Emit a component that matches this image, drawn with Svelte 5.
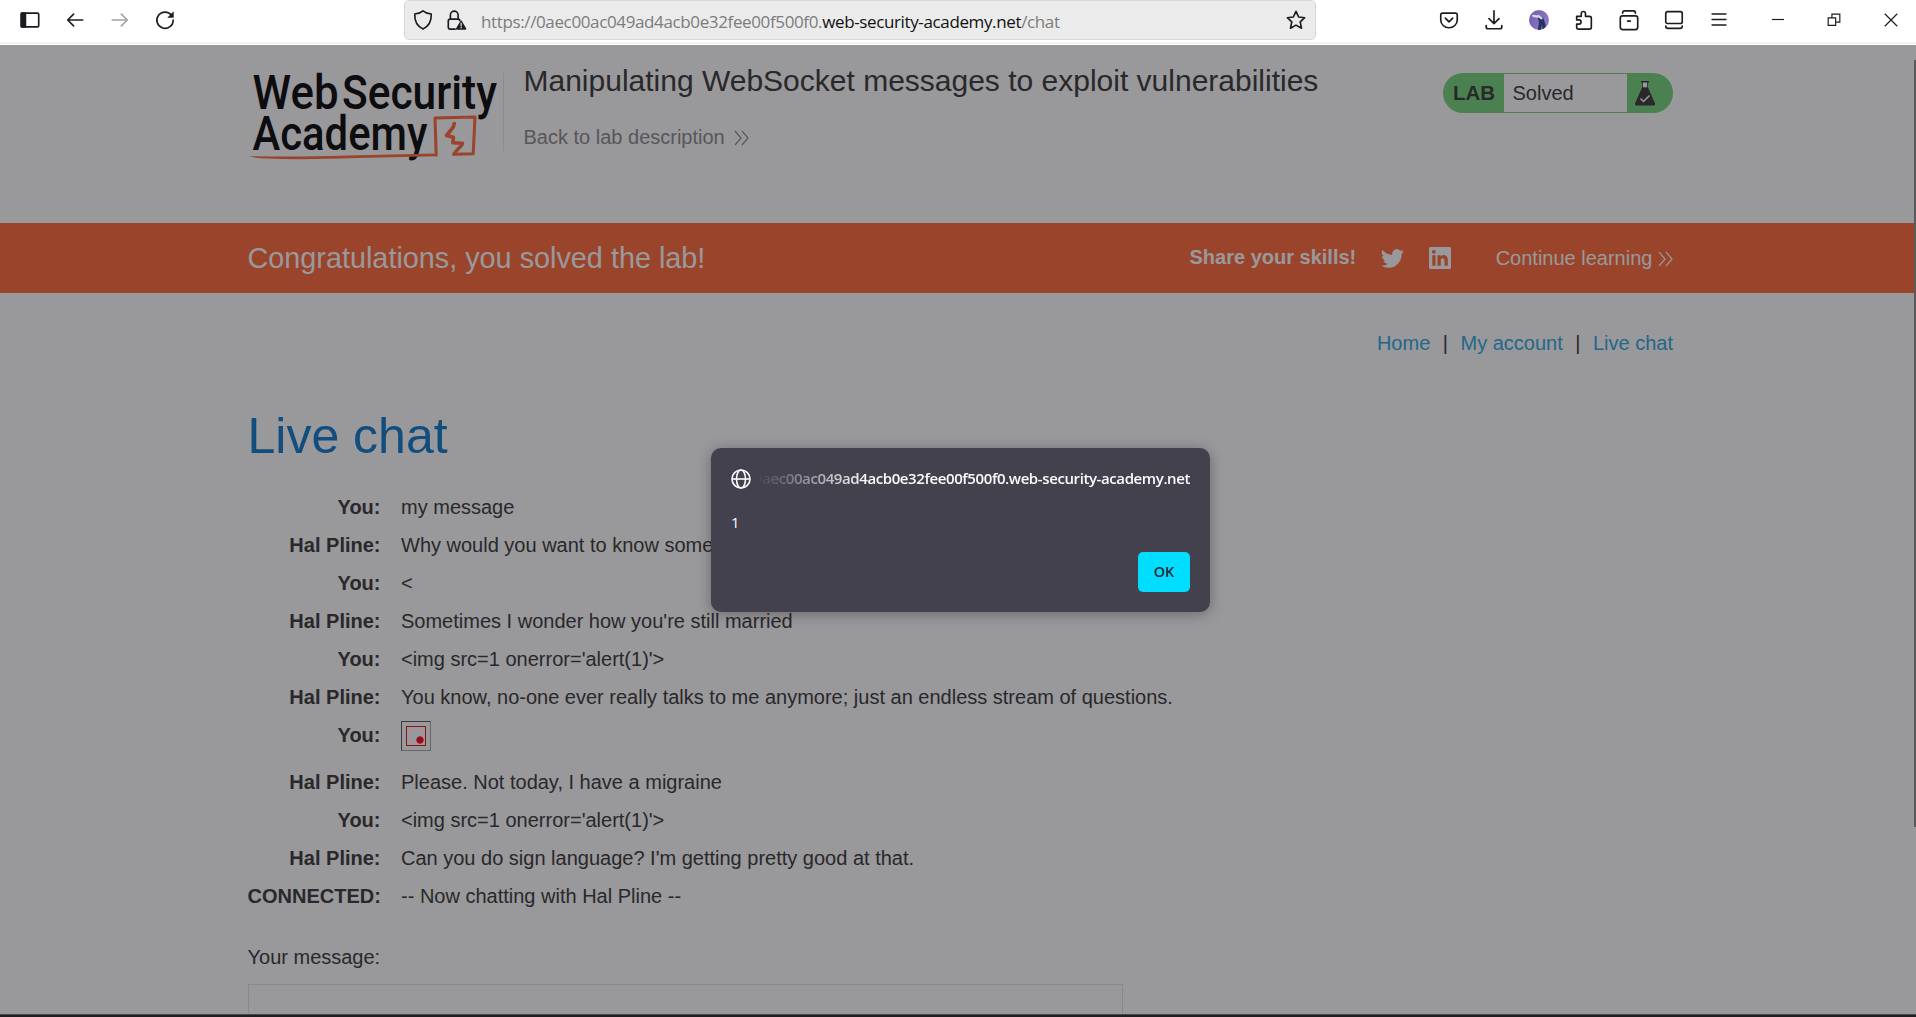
<script>
  const chat = [
    { who: 'You:', text: 'my message' },
    { who: 'Hal Pline:', text: 'Why would you want to know something like that?' },
    { who: 'You:', text: '<' },
    { who: 'Hal Pline:', text: "Sometimes I wonder how you're still married" },
    { who: 'You:', text: "<img src=1 onerror='alert(1)'>" },
    { who: 'Hal Pline:', text: 'You know, no-one ever really talks to me anymore; just an endless stream of questions.' },
    { who: 'You:', broken: true },
    { who: 'Hal Pline:', text: 'Please. Not today, I have a migraine' },
    { who: 'You:', text: "<img src=1 onerror='alert(1)'>" },
    { who: 'Hal Pline:', text: "Can you do sign language? I'm getting pretty good at that." },
    { who: 'CONNECTED:', text: '-- Now chatting with Hal Pline --' }
  ];
</script>

<div class="window">
  <header class="toolbar">
    <div class="tools">
      <button aria-label="Sidebar"><svg viewBox="0 0 24 24"><rect x="2.500" y="4.500" width="19" height="15" rx="1.6" /><path class="solid" d="M2.500 4.500h4.500v15H2.500z" /></svg></button>
      <button aria-label="Back"><svg viewBox="0 0 24 24"><path d="M20.500 12H4M10.500 5.500L4 12l6.500 6.500" /></svg></button>
      <button class="off" aria-label="Forward"><svg viewBox="0 0 24 24"><path d="M3.500 12H20M13.500 5.500L20 12l-6.500 6.500" /></svg></button>
      <button aria-label="Reload"><svg viewBox="0 0 24 24"><path d="M19.200 7A8.900 8.900 0 1 0 20.900 12" /><path class="solid" stroke="none" d="M21.500 2.500v7h-7z" /></svg></button>
    </div>
    <div class="address">
      <svg viewBox="0 0 24 24"><path d="M12 2c2.500 2.200 5.200 3.200 9 3.400.3 7.300-2.600 13.300-9 16.400C5.600 18.700 2.700 12.700 3 5.400c3.800-.2 6.500-1.200 9-3.400z" /></svg>
      <svg class="lock" viewBox="0 0 24 24"><path d="M10 22H4.500Q2.500 22 2.500 20v-7q0-2 2-2h8.500q2 0 2 1.500M4.800 11V6.500a4 4 0 0 1 8.400 0V11" /><path class="solid" d="M16.500 13.500l4.800 8.200h-9.600z" /><path class="mark" d="M16.500 15.500v3M16.500 20v.5" /></svg>
      <span class="url">https://0aec00ac049ad4acb0e32fee00f500f0.<b>web-security-academy.net</b>/chat</span>
      <svg class="star" viewBox="0 0 24 24"><path d="M12 2.500l2.900 6.200 6.600.8-4.900 4.600 1.400 6.900-6-3.400-6 3.400 1.400-6.900-4.900-4.600 6.600-.8z" /></svg>
    </div>
    <div class="tools right">
      <button aria-label="Pocket"><svg viewBox="0 0 24 24"><path d="M5 4.500h14q2 0 2 2v5.500a9 8.500 0 0 1-18 0V6.500q0-2 2-2zM8 10l4 4 4-4" /></svg></button>
      <button aria-label="Downloads"><svg viewBox="0 0 24 24"><path d="M12 2v14M6.500 10.500L12 16l5.500-5.500M3.500 18v1.500q0 2 2 2h13q2 0 2-2V18" /></svg></button>
      <button aria-label="Profile"><span class="avatar"><svg viewBox="0 0 24 24"><path class="body" d="M10 7l7 2 3 9-1 6h-2.500l-1-7-1 7h-4l1.500-9z" /><path class="arm" d="M5 7l5 1M11 7l4 3" /></svg></span></button>
      <button aria-label="Extensions"><svg viewBox="0 0 24 24"><path d="M4 8h5V5a2.300 2.300 0 0 1 4.600 0v3H18q2 0 2 2v10q0 2-2 2H6q-2 0-2-2v-3.500h2.500a2.300 2.300 0 0 0 0-4.600H4z" /></svg></button>
      <button aria-label="Archive"><svg viewBox="0 0 24 24"><rect x="2.500" y="7.500" width="19" height="15" rx="2.500" /><path d="M5 4.500q0-2.500 2-2.500h10q2 0 2 2.500M10.500 13.200h3" /></svg></button>
      <button aria-label="Panel"><svg viewBox="0 0 24 24"><rect x="3" y="2.800" width="18" height="13" rx="2" /><path d="M3 18.500q0 2.700 2.500 2.700h13q2.500 0 2.500-2.700" /></svg></button>
      <button aria-label="Menu"><svg viewBox="0 0 24 24"><path d="M4.500 5.500h15M4.500 11.500h15M4.500 17.500h15" /></svg></button>
    </div>
    <div class="controls">
      <button aria-label="Minimize"><svg viewBox="0 0 24 24"><path d="M4.800 11.400h14.400" /></svg></button>
      <button aria-label="Restore"><svg viewBox="0 0 24 24"><path d="M5 9.500h9v9H5zM9.500 9V5h9.500v9.500H14.500" /></svg></button>
      <button aria-label="Close"><svg viewBox="0 0 24 24"><path d="M4.500 4.500l15 15M19.500 4.500l-15 15" /></svg></button>
    </div>
  </header>

  <main class="page">
    <section class="lab-header wrap">
      <svg class="logo" viewBox="0 0 255 100">
        <g class="wordmark">
          <text x="4.500" y="44" textLength="86" lengthAdjust="spacingAndGlyphs">Web</text>
          <text x="94" y="44" textLength="155" lengthAdjust="spacingAndGlyphs">Security</text>
          <text x="4.500" y="84.500" textLength="175" lengthAdjust="spacingAndGlyphs">Academy</text>
        </g>
        <path class="line" d="M1.500 91.200C35 92 70 91.500 100 90.600L188 88.600V91.200L110 93Q50 95 20 93.500Q8 93.500 1.500 91.200z" />
        <path class="ribbon" d="M188.200 90.200L187 53l40-1-1.800 36.800-19.200.4" />
        <path class="ribbon bolt" d="M206.300 58.500Q206 62 203 65L198.500 70.500 205.500 72.200 204.800 77.800 214.500 78.300Q213.500 81 210 84L206 89" />
      </svg>
      <div class="heading">
        <h2>Manipulating WebSocket messages to exploit vulnerabilities</h2>
        <a class="back" href="#lab">Back to lab description <svg viewBox="0 0 15 16"><path d="M1 1l6 7-6 7M8 1l6 7-6 7" /></svg></a>
      </div>
      <div class="status">
        <strong>LAB</strong><span>Solved</span>
        <svg viewBox="0 0 20 25"><path class="neck" d="M7.500 1v6h5V1" /><path d="M6 0h8v1.500H6z" /><path d="M7 6.500h6l7 16q.4 2-1.500 2H1.500q-1.900 0-1.500-2z" /><path class="tick" d="M5.500 17.500l3 3 6-6" /></svg>
      </div>
    </section>

    <section class="banner">
      <div class="wrap">
        <h3>Congratulations, you solved the lab!</h3>
        <strong>Share your skills!</strong>
        <svg class="bird" viewBox="0 0 24 24"><path d="M23.950 4.570a10 10 0 0 1-2.820.77 4.960 4.960 0 0 0 2.160-2.720c-.95.550-2 .950-3.130 1.180a4.920 4.920 0 0 0-8.380 4.480C7.690 8.090 4.070 6.130 1.640 3.160a4.920 4.920 0 0 0 1.520 6.570 4.900 4.900 0 0 1-2.230-.61v.06a4.920 4.920 0 0 0 3.950 4.830 5 5 0 0 1-2.210.08 4.940 4.940 0 0 0 4.600 3.420A9.870 9.870 0 0 1 0 19.540a14 14 0 0 0 7.550 2.210c9.050 0 14-7.500 14-13.980 0-.21 0-.42-.02-.63a9.940 9.940 0 0 0 2.420-2.570z" /></svg>
        <svg class="linked" viewBox="0 0 24 24"><path fill-rule="evenodd" d="M1.500 0h21Q24 0 24 1.500v21q0 1.500-1.500 1.500h-21Q0 24 0 22.500v-21Q0 0 1.500 0zM3.600 9v11.500h3.500V9zM5.300 3.300a2.050 2.050 0 1 0 .01 0zM9.300 9v11.500h3.600v-5.700c0-3.600 4-3.400 4 0v5.700h3.600v-6.400c0-6-5.600-6.500-7.700-3.500V9z" /></svg>
        <a class="continue" href="#next">Continue learning <svg viewBox="0 0 15 16"><path d="M1 1l6 7-6 7M8 1l6 7-6 7" /></svg></a>
      </div>
    </section>

    <nav class="wrap links">
      <a href="#home">Home</a><i>|</i><a href="#account">My account</a><i>|</i><a href="#chat">Live chat</a>
    </nav>

    <section class="wrap chat">
      <h1>Live chat</h1>
      <div class="log">
        {#each chat as line}
          <div class="row" class:tall={line.broken}>
            <b>{line.who}</b>
            {#if line.broken}<span class="broken"><span></span></span>{:else}<span>{line.text}</span>{/if}
          </div>
        {/each}
      </div>
      <label for="msg">Your message:</label>
      <textarea id="msg"></textarea>
    </section>
    <div class="scroll"></div>
    <div class="scrim"></div>
  </main>
  <div class="edge"></div>

  <div class="dialog" role="alertdialog">
    <div class="origin">
      <svg viewBox="0 0 20 20"><circle cx="10" cy="10" r="9" /><ellipse cx="10" cy="10" rx="4.500" ry="9" /><path d="M1 10h18" /></svg>
      <span>0aec00ac049ad4acb0e32fee00f500f0.web-security-academy.net</span>
    </div>
    <p>1</p>
    <button>OK</button>
  </div>
</div>

<style>
  :global(body) { margin: 0; overflow: hidden; }
  .window { position: relative; width: 1916px; height: 1017px; overflow: hidden; background: #fff; font: 20px/38px "Liberation Sans", Arial, sans-serif; color: #333332; display: flex; flex-direction: column; }
  * { box-sizing: border-box; }
  button { border: 0; padding: 0; background: none; font: inherit; }
  a { text-decoration: none; }
  h1, h2, h3, p { margin: 0; font-weight: 400; }

  .toolbar { flex: none; height: 45px; display: flex; padding-left: 7.5px; background: linear-gradient(#fff 42px, #e9e9ea 43px, #fff 44px); }
  .toolbar svg { width: 22px; height: 22px; fill: none; stroke: #1c1b20; stroke-width: 1.8; stroke-linecap: round; stroke-linejoin: round; flex: none; }
  .toolbar .solid { fill: #1c1b20; }
  .tools { display: flex; flex: none; height: 40px; }
  .tools button { width: 45px; display: flex; align-items: center; justify-content: center; }
  .tools .off { opacity: .4; }
  .address { flex: none; margin-left: 216.5px; width: 912px; height: 40px; background: #ebebeb; border: 1px solid #d6d6d7; border-radius: 5px; display: flex; align-items: center; padding: 0 8px 0 7px; }
  .lock { margin-left: 12px; }
  .toolbar .lock .mark { stroke: #ebebeb; stroke-width: 1.300; }
  .url { margin-left: 13px; font: 17px/24px "Open Sans", "Noto Sans", sans-serif; color: #7c7c7d; letter-spacing: -.37px; white-space: nowrap; padding-top: 3px; }
  .url b { font-weight: 400; color: #111; }
  .star { margin-left: auto; }
  .right { margin-left: 110.500px; }
  .avatar { width: 20px; height: 20px; border-radius: 50%; background: linear-gradient(120deg, #6f5cae, #9a7dc9); overflow: hidden; display: flex; }
  .toolbar .avatar svg { width: 20px; height: 20px; stroke: none; }
  .toolbar .avatar .arm { stroke: #d5dbea; stroke-width: 2.600; }
  .avatar .body { fill: #26335c; }
  .controls { display: flex; flex: none; margin-left: 8px; height: 40px; }
  .controls button { width: 56.500px; flex: none; display: flex; align-items: center; justify-content: center; }
  .toolbar .controls svg { stroke-width: 1.400; width: 20px; height: 20px; stroke-linecap: butt; stroke-linejoin: miter; }

  .page { position: relative; height: 969px; overflow: hidden; background: #fff; }
  .wrap { width: 1425.500px; margin-left: 247.500px; }
  .lab-header { height: 178px; display: flex; align-items: flex-start; }
  .logo { flex: none; width: 255px; height: 100px; margin-top: 20px; overflow: visible; }
  .wordmark text { font: 500 48px Roboto, sans-serif; fill: #010101; }
  .ribbon { fill: none; stroke: #ff6633; stroke-width: 3; stroke-linejoin: round; stroke-linecap: round; }
  .line { fill: #ff6633; }
  .bolt { stroke-width: 3.600; }
  .heading { margin-top: 28px; height: 78px; border-left: 1px solid #e5e5e5; padding-left: 20px; }
  h2 { font-size: 30px; line-height: 36px; margin-top: -10px; white-space: nowrap; }
  .back { display: block; color: #888; line-height: 26px; margin-top: 25px; }
  .back svg, .continue svg { width: 15px; height: 16px; fill: none; stroke: currentColor; stroke-width: 1.200; margin-left: 4px; vertical-align: -2px; }
  .status { margin: 28px 0 0 auto; width: 230px; height: 40px; border-radius: 20px; background: #71d677; display: flex; padding: 1px 0; }
  .status strong { width: 61px; padding-left: 10px; font-size: 20.500px; }
  .status span { width: 123px; background: #fff; padding-left: 8.500px; }
  .status svg { width: 20px; height: 25px; margin: 7px 0 0 8px; fill: #333332; }
  .status .neck { fill: #fff; stroke: #333332; stroke-width: .8; }
  .status .tick { fill: none; stroke: #fff; stroke-width: 1.500; }

  .banner { background: #ff6633; height: 70px; color: #fff; }
  .banner .wrap { display: flex; align-items: center; height: 70px; }
  .banner strong { padding-bottom: 2px; }
  h3 { font-size: 28.800px; width: 942px; }
  .banner svg { fill: #fff; }
  .bird { width: 23px; height: 23px; margin-left: 25px; }
  .linked { width: 22px; height: 22px; margin-left: 25px; }
  .banner .continue { color: #fff; margin-left: auto; white-space: nowrap; }
  .banner .continue svg { fill: none; margin-left: 0; }
  .links { display: flex; justify-content: flex-end; margin-top: 31px; height: 38px; }
  .links a { color: #29a7df; }
  .links i { font-style: normal; margin: 0 12.500px; }
  h1 { font-size: 50px; line-height: 60px; color: #0a78c8; margin-top: 44px; }
  .log { margin-top: 22px; }
  .row { display: flex; height: 38px; }
  .row b { width: 133px; text-align: right; margin-right: 20.500px; }
  .row.tall { height: 47px; }
  .broken { width: 30px; height: 30px; margin-top: 5px; border: 1px solid #555; border-right-color: #a5a5a5; border-bottom-color: #a5a5a5; padding: 4px; }
  .broken span { display: block; width: 20px; height: 20px; border: 1px solid #ff0010; background: radial-gradient(circle at 13px 13px, #ff0010 3.300px, transparent 4px); }
  label { display: block; margin-top: 23px; }
  textarea { display: block; width: 875px; height: 120px; margin-top: 8px; border: 1px solid #e2e2e2; border-radius: 0; background: #fff; resize: none; }
  .scrim { position: absolute; inset: 0; background: rgba(28, 27, 34, .45); }
  .scroll { position: absolute; right: 0; top: 15px; width: 2px; height: 767px; background: #8d8d8d; }
  .edge { height: 3px; background: #1f1e22; border-top: 1px solid #4a484f; }

  .dialog { position: absolute; left: 711px; top: 448px; width: 499px; height: 164px; border-radius: 10px; background: #42414d; color: #fbfbfe; padding: 20px; box-shadow: 0 2px 14px rgba(20, 20, 26, .35); font: 15px/22px "Open Sans", "Noto Sans", sans-serif; display: flex; flex-direction: column; }
  .origin { display: flex; align-items: center; height: 22px; }
  .origin svg { flex: none; width: 20px; height: 20px; fill: none; stroke: #fbfbfe; stroke-width: 1.600; margin-right: 6px; }
  .origin span { flex: 1; min-width: 0; display: flex; justify-content: flex-end; font-weight: 600; letter-spacing: -.4px; padding-bottom: 2px; white-space: nowrap; overflow: hidden; mask-image: linear-gradient(to right, transparent, #000 110px); }
  .dialog p { margin-top: 21px; line-height: 22px; }
  .dialog button { margin-top: auto; align-self: flex-end; width: 52px; height: 40px; border-radius: 5px; background: #00ddff; color: #2b2a33; font-weight: 600; font-size: 14.500px; letter-spacing: -.2px; }
</style>
